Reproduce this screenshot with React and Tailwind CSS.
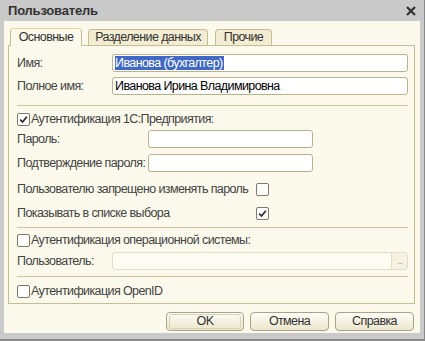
import React from 'react';

const Check = ({ checked }) => (
  <span className="w-[13px] h-[13px] shrink-0 rounded-[2px] border border-[#7d7a6c] bg-white flex items-center justify-center">
    {checked && (
      <svg width="9" height="9" viewBox="0 0 9 9">
        <path d="M1.2 4.6 L3.6 7 L7.8 1.8" fill="none" stroke="#2b2b2b" strokeWidth="1.7" />
      </svg>
    )}
  </span>
);

const Input = ({ className = '', children }) => (
  <div className={`h-[18px] rounded-[3px] border border-[#b9b28c] bg-white flex items-center pl-[2px] text-black ${className}`}>
    {children}
  </div>
);

const Separator = ({ className = '' }) => <div className={`h-px bg-[#cdc5a0] mr-[6px] ${className}`} />;

const Button = ({ label, primary, className = '' }) => (
  <button
    className={`h-[19px] rounded-[4px] border border-[#a9a283] bg-gradient-to-b from-[#fefdf7] to-[#ebe6cc] text-[#333] flex items-center justify-center ${className}`}
  >
    {primary ? (
      <span className="w-[calc(100%-4px)] h-[15px] rounded-[3px] border border-[#d8d2b4] flex items-center justify-center">
        {label}
      </span>
    ) : (
      label
    )}
  </button>
);

export default function App() {
  return (
    <div
      className="w-[425px] h-[341px] bg-[#c9c9c9] flex flex-col border-r border-b-2 border-[#8a8a8a] text-[12.5px] tracking-[-0.6px] leading-none text-[#444] whitespace-nowrap"
      style={{ fontFamily: '"Liberation Sans", Arial, sans-serif' }}
    >
      <div className="h-[21px] shrink-0 flex items-center justify-between pl-[8px] pr-[8px]">
        <span className="font-bold text-[13px] tracking-[-0.2px] text-[#333]">Пользователь</span>
        <svg width="10" height="10" viewBox="0 0 10 10">
          <path d="M1 1 L9 9 M9 1 L1 9" stroke="#333" strokeWidth="2.2" />
        </svg>
      </div>

      <div className="ml-[4px] mr-[4px] h-[312px] bg-[#fbf9eb] flex flex-col">
        <div className="h-[24px] pt-[7px] flex items-end ml-[6px] gap-[6px]">
          <div className="relative z-10 -mb-px w-[72px] h-[18px] rounded-t-[4px] border border-b-0 border-[#c7bd92] border-t-[#ecd595] bg-[#fbf9eb] flex items-center justify-center text-[#333]">
            Основные
          </div>
          <div className="w-[120px] h-[16px] rounded-t-[4px] border border-b-0 border-[#c7bd92] bg-[#f2ecd2] flex items-center justify-center text-[#333]">
            Разделение данных
          </div>
          <div className="ml-px w-[57px] h-[16px] rounded-t-[4px] border border-b-0 border-[#c7bd92] bg-[#f2ecd2] flex items-center justify-center text-[#333]">
            Прочие
          </div>
        </div>

        <div className="ml-[4px] mr-[5px] h-[259px] border border-[#c7bd92] flex flex-col pl-[8px] pt-[8px]">
          <div className="flex items-center h-[18px] pr-[6px]">
            <span className="w-[95px]">Имя:</span>
            <Input className="flex-1">
              <span className="bg-[#3f69c6] text-white h-[14px] flex items-center pr-[1px]">Иванова (бухгалтер)</span>
            </Input>
          </div>
          <div className="flex items-center h-[18px] mt-[5px] pr-[6px]">
            <span className="w-[95px]">Полное имя:</span>
            <Input className="flex-1">Иванова Ирина Владимировна</Input>
          </div>

          <Separator className="mt-[10px]" />

          <div className="flex items-center h-[13px] mt-[7px] gap-[1px]">
            <Check checked />
            <span>Аутентификация 1С:Предприятия:</span>
          </div>
          <div className="flex items-center h-[18px] mt-[4px]">
            <span className="w-[131px]">Пароль:</span>
            <Input className="w-[165px]" />
          </div>
          <div className="flex items-center h-[18px] mt-[6px]">
            <span className="w-[131px]">Подтверждение пароля:</span>
            <Input className="w-[165px]" />
          </div>
          <div className="flex items-center h-[13px] mt-[11px]">
            <span className="w-[239px]">Пользователю запрещено изменять пароль</span>
            <Check />
          </div>
          <div className="flex items-center h-[13px] mt-[11px]">
            <span className="w-[239px]">Показывать в списке выбора</span>
            <Check checked />
          </div>

          <Separator className="mt-[7px]" />

          <div className="flex items-center h-[13px] mt-[6px] gap-[1px]">
            <Check />
            <span>Аутентификация операционной системы:</span>
          </div>
          <div className="flex items-center h-[18px] mt-[5px] pr-[6px]">
            <span className="w-[95px]">Пользователь:</span>
            <div className="flex-1 h-[18px] rounded-[3px] border border-[#e2ddc5] bg-[#fdfcf3] flex justify-end">
              <div className="w-[16px] h-full border-l border-[#e2ddc5] bg-[#f4f1e2] rounded-r-[2px] flex items-end justify-center pb-[3px] text-[9px] text-[#aaa] tracking-[-1px]">
                ...
              </div>
            </div>
          </div>

          <Separator className="mt-[6px]" />

          <div className="flex items-center h-[13px] mt-[8px] gap-[1px]">
            <Check />
            <span>Аутентификация OpenID</span>
          </div>
        </div>

        <div className="mt-[8px] flex justify-end gap-[6px] pr-[6px]">
          <Button label="OK" primary className="w-[78px]" />
          <Button label="Отмена" className="w-[79px]" />
          <Button label="Справка" className="w-[79px]" />
        </div>
      </div>
    </div>
  );
}
